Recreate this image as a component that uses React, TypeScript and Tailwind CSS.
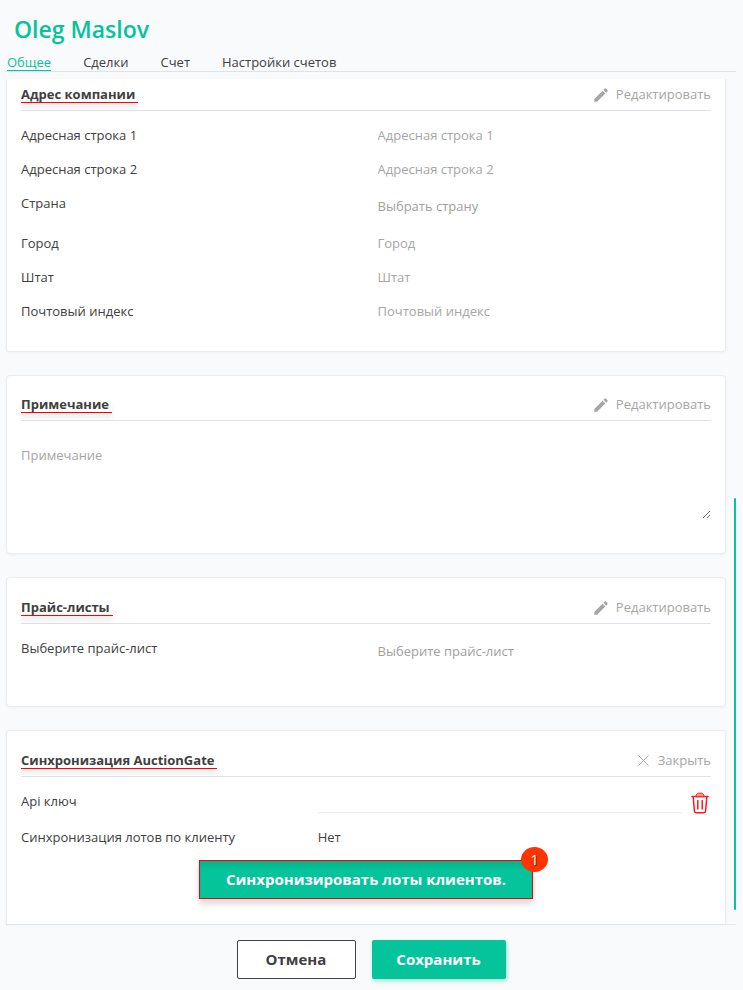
import type { ReactNode } from "react";
import { clsx } from "clsx";
import { MdEdit } from "react-icons/md";

const TABS = ["Общее", "Сделки", "Счет", "Настройки счетов"];

type AddressField = {
  id: string;
  label: string;
  placeholder: string;
  kind: "text" | "select";
};

const ADDRESS_FIELDS: AddressField[] = [
  { id: "line1", label: "Адресная строка 1", placeholder: "Адресная строка 1", kind: "text" },
  { id: "line2", label: "Адресная строка 2", placeholder: "Адресная строка 2", kind: "text" },
  { id: "country", label: "Страна", placeholder: "Выбрать страну", kind: "select" },
  { id: "city", label: "Город", placeholder: "Город", kind: "text" },
  { id: "state", label: "Штат", placeholder: "Штат", kind: "text" },
  { id: "zip", label: "Почтовый индекс", placeholder: "Почтовый индекс", kind: "text" },
];

export default function App() {
  return (
    <div className="flex min-h-screen flex-col bg-[#f9fafc] pr-[7px] pl-[6px] font-['Open_Sans','Noto_Sans',sans-serif] text-[13px] text-[#404040]">
      <header className="border-b border-[#dfe2e6] pt-[14px]">
        <h1 className="px-2 text-[23px] leading-[30px] font-semibold text-[#05c39a]">
          Oleg Maslov
        </h1>
        <nav className="mt-[9px] flex gap-8 pl-px">
          {TABS.map((tab, i) => (
            <a
              key={tab}
              href="#"
              aria-current={i === 0 ? "page" : undefined}
              className={clsx(
                "border-b pt-[2px] leading-[15px]",
                i === 0 ? "border-[#05c39a] text-[#05c39a]" : "border-transparent",
              )}
            >
              {tab}
            </a>
          ))}
        </nav>
      </header>

      <main className="relative flex flex-1 flex-col gap-[23px] pt-[7px] pr-[10px]">
        <Card className="border-t-0 pb-[23px]">
          <CardHeader title="Адрес компании" action={<EditButton />} />
          <div className="pt-[7px]">
            {ADDRESS_FIELDS.map((f) => (
              <FieldRow key={f.id} {...f} />
            ))}
          </div>
        </Card>

        <Card className="rounded-t pt-[13px] pb-[34px]">
          <CardHeader title="Примечание" action={<EditButton />} />
          <textarea
            aria-label="Примечание"
            placeholder="Примечание"
            className="mt-5 block h-[78px] w-full resize-y py-[5px] leading-[18px] outline-none placeholder:text-[#a6a6a6]"
          />
        </Card>

        <Card className="rounded-t pt-[14px] pb-[35px]">
          <CardHeader title="Прайс-листы" action={<EditButton />} />
          <div className="pt-[7px]">
            <FieldRow
              id="price"
              label="Выберите прайс-лист"
              placeholder="Выберите прайс-лист"
              kind="select"
            />
          </div>
        </Card>

        <Card className="flex-1 rounded-t rounded-b-none border-b-0 pt-[14px] pb-[23px]">
          <CardHeader title="Синхронизация AuctionGate" action={<CloseButton />} />
          <div className="grid grid-cols-[43%_1fr] pt-[7px] leading-[34px]">
            <label htmlFor="api-key">Api ключ</label>
            <div className="flex h-9 items-start gap-[9px] pr-[2px]">
              <input
                id="api-key"
                type="text"
                className="h-[29px] min-w-0 flex-1 border-b border-[#e9ebee] outline-none"
              />
              <button type="button" aria-label="Удалить" className="mt-2">
                <TrashIcon />
              </button>
            </div>
            <span>Синхронизация лотов по клиенту</span>
            <span>Нет</span>
          </div>
          <div className="mt-[6px] flex justify-center">
            <div className="relative">
              <button
                type="button"
                className="h-[39px] border border-[#ff0000] bg-[#05c39a] px-[26px] text-[15px] font-bold text-white shadow-[inset_0_7px_5px_-2px_rgba(0,0,0,0.08),0_5px_6px_rgba(0,0,0,0.14)]"
              >
                Синхронизировать лоты клиентов.
              </button>
              <span className="absolute -top-[13px] -right-[15px] flex h-[25px] w-[27px] items-center justify-center rounded-[50%] bg-[#ff3300] text-[14px] text-white [text-shadow:1px_1px_1px_rgba(0,0,0,0.6)]">
                1
              </span>
            </div>
          </div>
        </Card>

        {/* scroll thumb */}
        <div className="absolute top-1/2 right-0 h-[412px] w-[2px] rounded-full bg-[#05c39a]" />
      </main>

      <footer className="flex justify-center gap-4 border-t border-[#e6e9eb] pt-[15px] pb-[11px] text-[15px] font-bold">
        <button
          type="button"
          className="h-[39px] w-[119px] rounded-[2px] border border-[#404040] bg-white"
        >
          Отмена
        </button>
        <button
          type="button"
          className="h-[39px] w-[134px] rounded-[2px] bg-[#05c39a] text-white shadow-[1px_2px_4px_rgba(5,195,154,0.4)]"
        >
          Сохранить
        </button>
      </footer>
    </div>
  );
}

function Card({ className, children }: { className?: string; children: ReactNode }) {
  return (
    <section
      className={clsx(
        "rounded-b border border-[#eaecee] bg-white px-[14px] shadow-[0_1px_3px_rgba(0,0,0,0.04)]",
        className,
      )}
    >
      {children}
    </section>
  );
}

function CardHeader({ title, action }: { title: string; action: ReactNode }) {
  return (
    <div className="flex items-start justify-between border-b border-[#dfe2e8] pt-2 pb-[7px] leading-[15px]">
      <h2 className="border-b border-[#ff0000] pr-[3px] font-bold shadow-[0_6px_4px_rgba(0,0,0,0.05)]">
        {title}
      </h2>
      {action}
    </div>
  );
}

function EditButton() {
  return (
    <button type="button" className="flex h-[15px] items-center gap-[6px] text-[#a6a6a6]">
      <MdEdit className="size-[18px] shrink-0" aria-hidden />
      Редактировать
    </button>
  );
}

function CloseButton() {
  return (
    <button type="button" className="flex h-[15px] items-center gap-[9px] text-[#a6a6a6]">
      <svg width="11" height="11" viewBox="0 0 11 11" stroke="currentColor" aria-hidden>
        <path d="M0.5 0.5l10 10M10.5 0.5l-10 10" />
      </svg>
      Закрыть
    </button>
  );
}

function FieldRow({ id, label, placeholder, kind }: AddressField) {
  return (
    <div className={clsx("flex", kind === "select" ? "h-10" : "h-[34px]")}>
      <label htmlFor={id} className="flex-[356] leading-[34px]">
        {label}
      </label>
      {kind === "select" ? (
        <select
          id={id}
          className="min-w-0 flex-[333] appearance-none pt-[2px] text-[#a0a0a0] outline-none"
        >
          <option>{placeholder}</option>
        </select>
      ) : (
        <input
          id={id}
          type="text"
          placeholder={placeholder}
          className="min-w-0 flex-[333] pt-[2px] outline-none placeholder:text-[#a6a6a6]"
        />
      )}
    </div>
  );
}

function TrashIcon() {
  return (
    <svg
      width="18"
      height="22"
      viewBox="0 0 18 22"
      fill="none"
      stroke="#ff1a1a"
      strokeWidth="1.5"
      strokeLinecap="round"
      strokeLinejoin="round"
      aria-hidden
    >
      <path d="M1 4.6h16" />
      <path
        d="M5 4.4C5.2 2.2 6.2 1.2 7.6 1.2h2.8c1.4 0 2.4 1 2.6 3.2z"
        fill="#ff9a9a"
        strokeWidth="1"
      />
      <path d="M2.2 5l1.2 13.8c.1 1.3.7 1.9 2 1.9h7.2c1.3 0 1.900-.6 2-1.900L15.8 5" />
      <path d="M6.8 8.5V17M11.2 8.5V17" />
    </svg>
  );
}
